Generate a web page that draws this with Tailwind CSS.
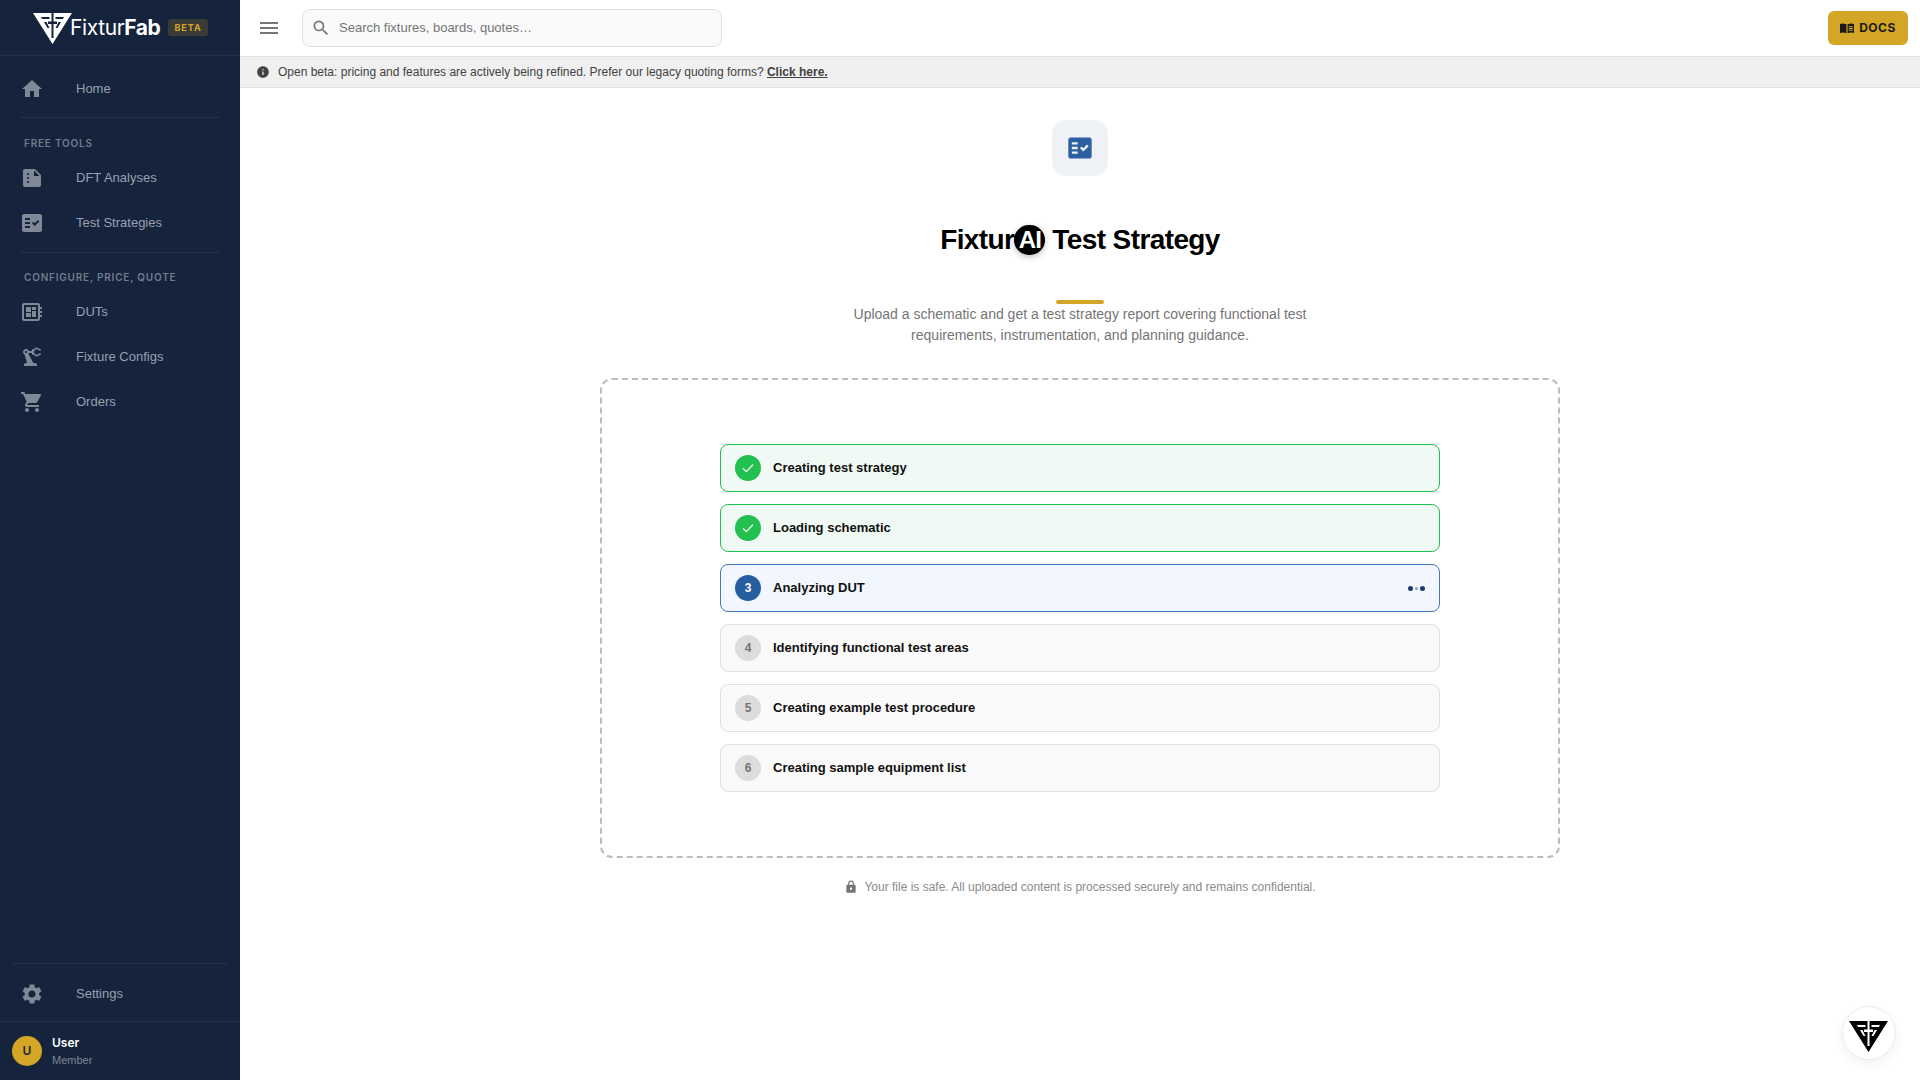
<!DOCTYPE html>
<html lang="en">
<head>
    <meta charset="UTF-8">
    <title>FixturAI Test Strategy</title>
    <script src="https://cdn.jsdelivr.net/npm/@tailwindcss/browser@4"></script>
</head>
<body class="h-[1080px] w-[1920px] overflow-hidden bg-white font-['Liberation_Sans',sans-serif] text-black">
<div class="flex h-full">
    <!-- Sidebar -->
    <aside class="flex w-[240px] shrink-0 flex-col bg-[#15233d] text-[#98a1b0]">
        <div class="flex h-[56px] items-center border-b border-[#24324b] pl-[33px]">
            <svg class="h-[32px] w-[40px] shrink-0" viewBox="0 0 40 32" fill="#fff">
                <path fill-rule="evenodd" d="M0 1H39L19.500 32ZM18.500 1V9.500H15V12H18.500V26H20.500V12H24V9.500H20.500V1ZM8 5H16.500V7H9.200ZM11 10H13.500L16.500 16H14.500ZM31 5H22.500V7H29.800ZM28 10H25.500L22.500 16H24.500Z"/>
            </svg>
            <span class="-ml-[3px] font-['Inter',sans-serif] text-[21px] leading-none tracking-[-0.4px] text-white">Fixtur<span class="font-bold">Fab</span></span>
            <span class="ml-[8px] rounded-[3px] bg-[#3a3b38] px-[6px] py-[3px] font-['Inter',sans-serif] text-[9px] leading-[11px] font-bold tracking-[1px] text-[#d4a826]">BETA</span>
        </div>
        <nav class="flex flex-1 flex-col">
            <a class="mt-[10px] flex h-[45px] items-center text-[13px]">
                <svg class="ml-[20px] h-[24px] w-[24px]" viewBox="0 0 24 24" fill="#7f8897"><path d="M10 20v-6h4v6h5v-8h3L12 3 2 12h3v8z"/></svg>
                <span class="ml-[32px]">Home</span>
            </a>
            <div class="mx-[20px] mt-[6px] border-t border-[#24324b]"></div>
            <div class="mt-[19px] mb-[6px] pl-[24px] font-['Inter',sans-serif] text-[10px] leading-[12px] font-semibold tracking-[0.8px] text-[#727c8c]">FREE TOOLS</div>
            <a class="flex h-[45px] items-center text-[13px]">
                <svg class="ml-[20px] h-[24px] w-[24px]" viewBox="0 0 24 24" fill="#7f8897"><path d="M15 3H5c-1.100 0-2 .9-2 2v14c0 1.100.9 2 2 2h14c1.100 0 2-.9 2-2V9l-6-6zM8 17c-.55 0-1-.45-1-1s.45-1 1-1 1 .45 1 1-.45 1-1 1zm0-4c-.55 0-1-.45-1-1s.45-1 1-1 1 .45 1 1-.45 1-1 1zm0-4c-.55 0-1-.45-1-1s.45-1 1-1 1 .45 1 1-.45 1-1 1zm6 1V4.500l5.500 5.500H14z"/></svg>
                <span class="ml-[32px]">DFT Analyses</span>
            </a>
            <a class="flex h-[45px] items-center text-[13px]">
                <svg class="ml-[20px] h-[24px] w-[24px]" viewBox="0 0 24 24" fill="#7f8897"><path d="M20 3H4c-1.100 0-2 .9-2 2v14c0 1.100.9 2 2 2h16c1.100 0 2-.9 2-2V5c0-1.100-.9-2-2-2zM10 17H5v-2h5v2zm0-4H5v-2h5v2zm0-4H5V7h5v2zm4.820 6L12 12.160l1.410-1.410 1.410 1.420L17.990 9l1.420 1.420L14.820 15z"/></svg>
                <span class="ml-[32px]">Test Strategies</span>
            </a>
            <div class="mx-[20px] mt-[7px] border-t border-[#24324b]"></div>
            <div class="mt-[18px] mb-[6px] pl-[24px] font-['Inter',sans-serif] text-[10px] leading-[12px] font-semibold tracking-[0.8px] text-[#727c8c]">CONFIGURE, PRICE, QUOTE</div>
            <a class="flex h-[45px] items-center text-[13px]">
                <svg class="ml-[20px] h-[24px] w-[24px]" viewBox="0 0 24 24" fill="#7f8897"><path d="M22 9V7h-2V5c0-1.100-.9-2-2-2H4c-1.100 0-2 .9-2 2v14c0 1.100.9 2 2 2h14c1.100 0 2-.9 2-2v-2h2v-2h-2v-2h2v-2h-2V9h2zm-4 10H4V5h14v14zM6 13h5v4H6zm6-6h4v3h-4zM6 7h5v5H6zm6 4h4v6h-4z"/></svg>
                <span class="ml-[32px]">DUTs</span>
            </a>
            <a class="flex h-[45px] items-center text-[13px]">
                <svg class="ml-[20px] h-[24px] w-[24px]" viewBox="0 0 24 24" fill="#7f8897"><path fill-rule="evenodd" d="M19.930 8.350l-3.600 1.680L14 7.700V6.300l2.330-2.330 3.600 1.680c.38.180.82.010 1-.360.18-.380.010-.82-.360-1l-3.920-1.830c-.38-.180-.83-.1-1.130.2L13.780 4.400c-.18-.24-.46-.4-.78-.4-.55 0-1 .45-1 1v1H8.820C8.400 4.840 7.300 4 6 4 4.340 4 3 5.340 3 7c0 1.100.6 2.050 1.480 2.570L7.080 18H6c-1.100 0-2 .9-2 2v1h13v-1c0-1.100-.9-2-2-2h-1.620L8.410 8.770c.17-.24.31-.49.41-.77H12v1c0 .55.45 1 1 1 .32 0 .6-.16.78-.4l1.740 1.740c.3.3.75.38 1.130.2l3.920-1.830c.38-.18.54-.62.36-1-.18-.37-.62-.54-1-.36zM6 8c-.55 0-1-.45-1-1s.45-1 1-1 1 .45 1 1-.45 1-1 1z"/></svg>
                <span class="ml-[32px]">Fixture Configs</span>
            </a>
            <a class="flex h-[45px] items-center text-[13px]">
                <svg class="ml-[20px] h-[24px] w-[24px]" viewBox="0 0 24 24" fill="#7f8897"><path d="M7 18c-1.100 0-1.990.9-1.990 2S5.900 22 7 22s2-.9 2-2-.9-2-2-2zM1 2v2h2l3.600 7.590-1.350 2.450c-.16.280-.25.610-.25.960 0 1.100.9 2 2 2h12v-2H7.420c-.14 0-.25-.110-.25-.25l.03-.120.900-1.630h7.450c.75 0 1.410-.410 1.750-1.030l3.580-6.490c.08-.14.120-.31.120-.48 0-.55-.45-1-1-1H5.210l-.94-2H1zm16 16c-1.100 0-1.990.9-1.990 2s.89 2 1.990 2 2-.9 2-2-.9-2-2-2z"/></svg>
                <span class="ml-[32px]">Orders</span>
            </a>
            <div class="mt-auto mx-[12px] border-t border-[#24324b]"></div>
            <a class="flex h-[57px] items-center pt-[2px] text-[13px]">
                <svg class="ml-[20px] h-[24px] w-[24px]" viewBox="0 0 24 24" fill="#7f8897"><path d="M19.140 12.940c.04-.3.060-.61.060-.94 0-.32-.02-.64-.070-.94l2.030-1.580a.49.49 0 0 0 .120-.61l-1.920-3.320a.49.49 0 0 0-.590-.220l-2.390.96c-.5-.38-1.030-.7-1.620-.94l-.36-2.540a.484.484 0 0 0-.48-.41h-3.840c-.24 0-.43.170-.47.410l-.36 2.540c-.59.240-1.130.570-1.620.94l-2.390-.96a.49.49 0 0 0-.590.220L2.740 8.870c-.12.210-.08.470.120.610l2.030 1.580c-.05.3-.09.630-.09.940s.02.640.070.940l-2.030 1.580a.49.49 0 0 0-.120.610l1.920 3.320c.12.220.37.290.59.220l2.390-.96c.5.380 1.030.7 1.620.94l.36 2.540c.05.240.24.410.48.410h3.840c.24 0 .44-.170.470-.410l.36-2.540c.59-.240 1.130-.560 1.620-.94l2.390.96c.22.080.47 0 .59-.220l1.920-3.320c.12-.220.070-.470-.120-.610l-2.010-1.580zM12 15.600A3.610 3.610 0 0 1 8.400 12c0-1.980 1.620-3.600 3.600-3.600s3.600 1.620 3.600 3.600-1.620 3.600-3.600 3.600z"/></svg>
                <span class="ml-[32px]">Settings</span>
            </a>
        </nav>
        <div class="flex h-[59px] items-center gap-[10px] border-t border-[#24324b] pl-[12px]">
            <div class="flex h-[30px] w-[30px] items-center justify-center rounded-full bg-[#d4a626] font-['Inter',sans-serif] text-[12px] font-semibold text-[#15233d]">U</div>
            <div>
                <div class="font-['Inter',sans-serif] text-[12px] leading-[16px] font-semibold text-white">User</div>
                <div class="mt-[1px] text-[11px] leading-[16px] text-[#7f8897]">Member</div>
            </div>
        </div>
    </aside>

    <!-- Main column -->
    <div class="flex min-w-0 flex-1 flex-col">
        <header class="flex h-[56px] shrink-0 items-center bg-white pr-[12px]">
            <svg class="ml-[17px] h-[24px] w-[24px] text-[#757575]" viewBox="0 0 24 24" fill="currentColor"><path d="M3 18h18v-2H3zm0-5h18v-2H3zm0-7v2h18V6z"/></svg>
            <div class="ml-[21px] flex h-[38px] w-[420px] items-center rounded-[8px] border border-[#e0e0e0] bg-[#fafafa]">
                <svg class="ml-[8px] h-[20px] w-[20px] text-[#757575]" viewBox="0 0 24 24" fill="currentColor"><path d="M15.500 14h-.79l-.28-.27A6.470 6.470 0 0 0 16 9.500 6.500 6.500 0 1 0 9.500 16c1.610 0 3.090-.59 4.230-1.570l.27.280v.79l5 4.990L20.490 19zm-6 0C7.010 14 5 11.990 5 9.500S7.010 5 9.500 5 14 7.010 14 9.500 11.990 14 9.500 14z"/></svg>
                <span class="ml-[8px] text-[13px] text-[#757575]">Search fixtures, boards, quotes…</span>
            </div>
            <a class="ml-auto flex h-[34px] w-[80px] items-center justify-center gap-[5px] rounded-[6px] bg-[#d4a626] font-['Inter',sans-serif] text-[12px] font-bold tracking-[0.5px] text-[#1a1a1a]">
                <svg class="h-[14px] w-[14px]" viewBox="0 0 24 24" fill="currentColor"><path fill-rule="evenodd" d="M0 5c3-1.200 7-1.200 11 .5V21c-4-1.700-8-1.700-11-.5zM13 5.500c4-1.700 8-1.700 11-.5v15.500c-3-1.200-7-1.200-11 .5zM15 9v1.500h7V9zM15 12v1.500h7V12zM15 15v1.500h7V15z"/></svg>
                DOCS
            </a>
        </header>
        <div class="flex h-[32px] shrink-0 items-center border-y border-[#e0e0e0] bg-[#f0f0f0] pl-[16px] text-[12px] text-[#424242]">
            <svg class="h-[14px] w-[14px]" viewBox="0 0 24 24" fill="#424242"><path d="M12 2C6.480 2 2 6.480 2 12s4.480 10 10 10 10-4.480 10-10S17.520 2 12 2zm1 15h-2v-6h2zm0-8h-2V7h2z"/></svg>
            <span class="ml-[8px]">Open beta: pricing and features are actively being refined. Prefer our legacy quoting forms? <a class="font-bold underline">Click here.</a></span>
        </div>

        <main class="flex flex-1 flex-col items-center">
            <div class="mt-[32px] flex h-[56px] w-[56px] items-center justify-center rounded-[14px] bg-[#eef2f7]">
                <svg class="h-[28px] w-[28px]" viewBox="0 0 24 24" fill="#2a5fa0"><path d="M20 3H4c-1.100 0-2 .9-2 2v14c0 1.100.9 2 2 2h16c1.100 0 2-.9 2-2V5c0-1.100-.9-2-2-2zM10 17H5v-2h5v2zm0-4H5v-2h5v2zm0-4H5V7h5v2zm4.820 6L12 12.160l1.410-1.410 1.410 1.420L17.990 9l1.420 1.420L14.820 15z"/></svg>
            </div>
            <h1 class="mt-[48px] flex h-[32px] items-center text-[28px] leading-[32px] font-bold tracking-[-0.6px]">
                Fixtur<span class="inline-flex h-[30px] w-[31px] items-center justify-center rounded-full bg-black text-[24px] font-bold tracking-[-1px] text-white shadow-[0_2px_6px_rgba(0,0,0,0.25)]">AI</span><span class="ml-[7px]">Test Strategy</span>
            </h1>
            <div class="mt-[44px] h-[4px] w-[48px] rounded-[2px] bg-[#d4a626]"></div>
            <p class="w-[520px] text-center text-[14px] leading-[21px] text-[#757575]">Upload a schematic and get a test strategy report covering functional test<br>requirements, instrumentation, and planning guidance.</p>

            <section class="mt-[32px] flex h-[480px] w-[960px] flex-col items-center justify-center gap-[12px] rounded-[12px] border-2 border-dashed border-[#bdbdbd]">
                <div class="flex h-[48px] w-[720px] items-center rounded-[8px] border border-[#22c04f] bg-[#f0f9f3] pl-[14px]">
                    <span class="flex h-[26px] w-[26px] items-center justify-center rounded-full bg-[#22c04f]"><svg class="h-[16px] w-[16px]" viewBox="0 0 24 24" fill="none" stroke="#fff" stroke-width="1.800"><path d="M4.500 12.500l5 5L19.500 7"/></svg></span>
                    <span class="ml-[12px] text-[13px] font-bold text-[#111]">Creating test strategy</span>
                </div>
                <div class="flex h-[48px] w-[720px] items-center rounded-[8px] border border-[#22c04f] bg-[#f0f9f3] pl-[14px]">
                    <span class="flex h-[26px] w-[26px] items-center justify-center rounded-full bg-[#22c04f]"><svg class="h-[16px] w-[16px]" viewBox="0 0 24 24" fill="none" stroke="#fff" stroke-width="1.800"><path d="M4.500 12.500l5 5L19.500 7"/></svg></span>
                    <span class="ml-[12px] text-[13px] font-bold text-[#111]">Loading schematic</span>
                </div>
                <div class="flex h-[48px] w-[720px] items-center rounded-[8px] border border-[#3f7cc4] bg-[#f2f6fe] pl-[14px] pr-[14px]">
                    <span class="flex h-[26px] w-[26px] items-center justify-center rounded-full bg-[#265e9f] text-[12px] font-bold text-white">3</span>
                    <span class="ml-[12px] text-[13px] font-bold text-[#111]">Analyzing DUT</span>
                    <span class="ml-auto flex items-center gap-[2px]">
                        <span class="h-[5px] w-[5px] rounded-full bg-[#1f3a6b]"></span>
                        <span class="h-[3px] w-[3px] rounded-full bg-[#8e9fbd]"></span>
                        <span class="h-[5px] w-[5px] rounded-full bg-[#1f3a6b]"></span>
                    </span>
                </div>
                <div class="flex h-[48px] w-[720px] items-center rounded-[8px] border border-[#e0e0e0] bg-[#fafafa] pl-[14px]">
                    <span class="flex h-[26px] w-[26px] items-center justify-center rounded-full bg-[#dcdcdc] text-[12px] font-bold text-[#757575]">4</span>
                    <span class="ml-[12px] text-[13px] font-bold text-[#111]">Identifying functional test areas</span>
                </div>
                <div class="flex h-[48px] w-[720px] items-center rounded-[8px] border border-[#e0e0e0] bg-[#fafafa] pl-[14px]">
                    <span class="flex h-[26px] w-[26px] items-center justify-center rounded-full bg-[#dcdcdc] text-[12px] font-bold text-[#757575]">5</span>
                    <span class="ml-[12px] text-[13px] font-bold text-[#111]">Creating example test procedure</span>
                </div>
                <div class="flex h-[48px] w-[720px] items-center rounded-[8px] border border-[#e0e0e0] bg-[#fafafa] pl-[14px]">
                    <span class="flex h-[26px] w-[26px] items-center justify-center rounded-full bg-[#dcdcdc] text-[12px] font-bold text-[#757575]">6</span>
                    <span class="ml-[12px] text-[13px] font-bold text-[#111]">Creating sample equipment list</span>
                </div>
            </section>

            <div class="mt-[20px] flex items-center gap-[6px] text-[12px] text-[#8a8a8a]">
                <svg class="h-[14px] w-[14px]" viewBox="0 0 24 24" fill="#757575"><path d="M18 8h-1V6c0-2.760-2.240-5-5-5S7 3.240 7 6v2H6c-1.100 0-2 .9-2 2v10c0 1.100.9 2 2 2h12c1.100 0 2-.9 2-2V10c0-1.100-.9-2-2-2zm-6 9c-1.100 0-2-.9-2-2s.9-2 2-2 2 .9 2 2-.9 2-2 2zm3.100-9H8.900V6c0-1.710 1.390-3.100 3.100-3.100s3.100 1.390 3.100 3.100z"/></svg>
                Your file is safe. All uploaded content is processed securely and remains confidential.
            </div>
        </main>
    </div>
</div>

<!-- Floating assistant button -->
<div class="absolute top-[1006px] left-[1842px] flex h-[54px] w-[54px] items-center justify-center rounded-full border border-[#e8edf5] bg-white shadow-[0_4px_12px_rgba(0,0,0,0.06)]">
    <svg class="mt-[6px] h-[32px] w-[40px]" viewBox="0 0 40 32" fill="#000">
        <path fill-rule="evenodd" d="M0 1H39L19.500 32ZM18.500 1V9.500H15V12H18.500V26H20.500V12H24V9.500H20.500V1ZM8 5H16.500V7H9.200ZM11 10H13.500L16.500 16H14.500ZM31 5H22.500V7H29.800ZM28 10H25.500L22.500 16H24.500Z"/>
    </svg>
</div>
</body>
</html>
